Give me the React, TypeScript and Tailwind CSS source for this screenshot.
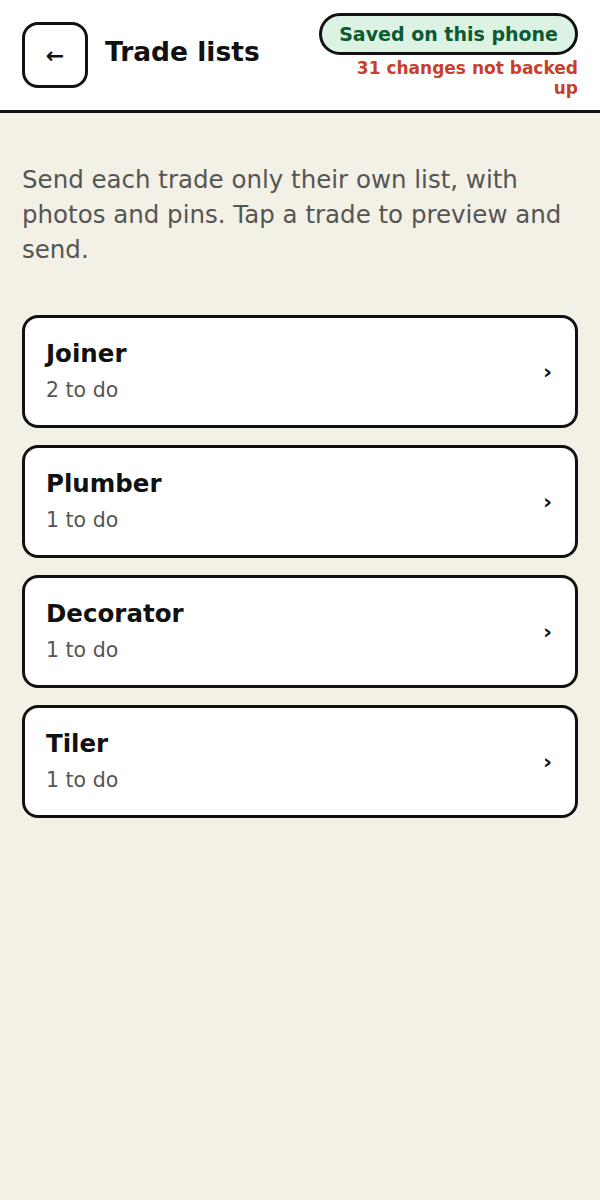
const trades = [
  { name: "Joiner", todo: 2 },
  { name: "Plumber", todo: 1 },
  { name: "Decorator", todo: 1 },
  { name: "Tiler", todo: 1 },
];

export default function App() {
  return (
    <div className="min-h-[1200px] bg-[#f3f0e6] font-['DejaVu_Sans',sans-serif] text-[#111]">
      <header className="flex h-[113px] items-center justify-between border-b-[3px] border-[#111] bg-white px-[22px]">
        <div className="flex items-center gap-[17px]">
          <button className="grid h-[66px] w-[66px] place-items-center rounded-2xl border-[3px] border-[#111] bg-white text-[22px] font-bold">
            ←
          </button>
          <h1 className="pb-[5px] text-[26.5px] font-bold leading-none">Trade lists</h1>
        </div>
        <div className="flex flex-col items-end">
          <span className="whitespace-nowrap rounded-full border-[3px] border-[#111] bg-[#dcf3e4] px-[17px] py-[5px] text-[19px] font-bold leading-[26px] text-[#0d5a32]">
            Saved on this phone
          </span>
          <p className="mt-[3px] max-w-[240px] text-right text-[17px] font-bold leading-[20px] text-[#c9402a]">
            31 changes not backed up
          </p>
        </div>
      </header>

      <main className="px-[22px] pt-[50px]">
        <p className="text-[24.5px] leading-[34.8px] text-[#555]">
          Send each trade only their own list, with photos and pins. Tap a trade to preview and send.
        </p>

        <div className="mt-[48px] flex flex-col gap-[17px]">
          {trades.map((t) => (
            <button
              key={t.name}
              className="flex items-center justify-between rounded-2xl border-[3px] border-[#111] bg-white px-[21px] py-[21px] text-left"
            >
              <div>
                <p className="text-[24.5px] font-bold leading-[30px]">{t.name}</p>
                <p className="mt-[7px] text-[20.5px] leading-[28px] text-[#555]">{t.todo} to do</p>
              </div>
              <span className="pr-[2px] text-[22px] font-bold leading-none">›</span>
            </button>
          ))}
        </div>
      </main>
    </div>
  );
}
